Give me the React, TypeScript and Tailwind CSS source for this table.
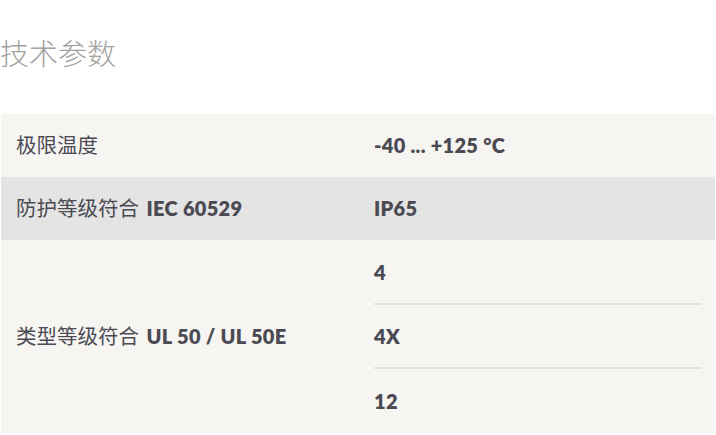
export default function App() {
  const latin = "font-['Lato','Noto_Sans_CJK_SC',sans-serif] font-extrabold tracking-[0.3px]";
  const cjk = "pl-[15px] pb-[2px] text-[20.5px] font-['Noto_Sans_CJK_SC',sans-serif]";
  return (
    <div className="min-h-screen bg-white text-[#4b4a52] font-['Lato','Noto_Sans_CJK_SC',sans-serif]">
      <h2 className="h-[114px] pt-[33px] text-[29px] leading-[38px] font-light text-[#a2a2a0] font-['Noto_Sans_CJK_SC',sans-serif]">
        技术参数
      </h2>

      <div className="mx-px">
        {/* row 1 */}
        <div className="grid h-[63px] grid-cols-[373px_1fr] items-center bg-[#f6f5f2]">
          <div className={cjk}>极限温度</div>
          <div className={`${latin} pb-[2px] text-[20px]`}>-40 ... +125 °C</div>
        </div>

        {/* row 2 */}
        <div className="grid h-[63px] grid-cols-[373px_1fr] items-center bg-[#e4e4e4]">
          <div className={cjk}>
            防护等级符合 <span className={`${latin} ml-[3px] text-[20px]`}>IEC 60529</span>
          </div>
          <div className={`${latin} pb-[2px] text-[20px]`}>IP65</div>
        </div>

        {/* row 3 */}
        <div className="grid grid-cols-[373px_1fr] items-center bg-[#f6f5f2]">
          <div className={cjk}>
            类型等级符合 <span className={`${latin} ml-[3px] text-[20px]`}>UL 50 / UL 50E</span>
          </div>
          <div className="mr-[13px] flex flex-col">
            <div className={`${latin} flex h-[65px] items-center border-b-2 border-[#e3e1dc] text-[20px]`}>4</div>
            <div className={`${latin} flex h-[64px] items-center border-b-2 border-[#e3e1dc] text-[20px]`}>4X</div>
            <div className={`${latin} flex h-[64px] items-center text-[20px]`}>12</div>
          </div>
        </div>
      </div>
    </div>
  );
}
